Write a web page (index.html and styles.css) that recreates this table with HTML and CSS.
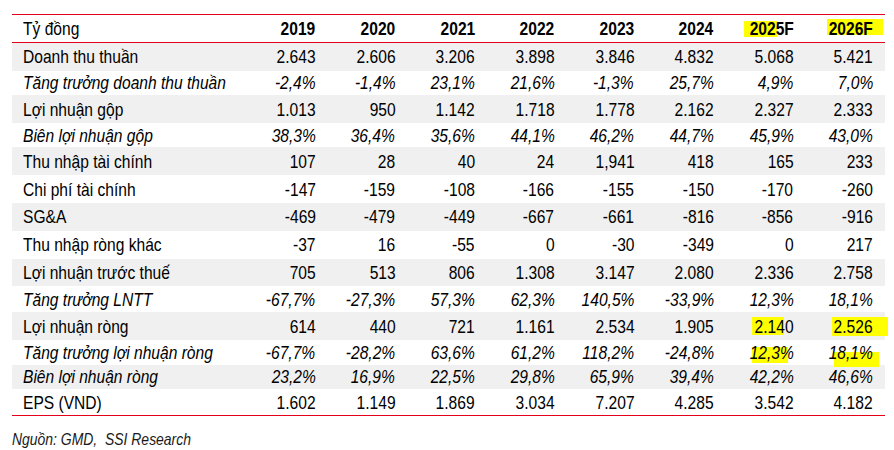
FILE: index.html
```html
<!DOCTYPE html>
<html lang="vi">
<head>
<meta charset="utf-8">
<title>GMD</title>
<link rel="stylesheet" href="styles.css">
</head>
<body>
<div class="table">
  <div class="row head">
    <div class="label"><span>Tỷ đồng</span></div>
    <div class="num"><span>2019</span></div><div class="num"><span>2020</span></div><div class="num"><span>2021</span></div><div class="num"><span>2022</span></div>
    <div class="num"><span>2023</span></div><div class="num"><span>2024</span></div>
    <div class="num hl hl-h25"><span>2025F</span></div>
    <div class="num hl hl-h26"><span>2026F</span></div>
  </div>
  <div class="row gray">
    <div class="label"><span>Doanh thu thuần</span></div>
    <div class="num"><span>2.643</span></div><div class="num"><span>2.606</span></div><div class="num"><span>3.206</span></div><div class="num"><span>3.898</span></div><div class="num"><span>3.846</span></div><div class="num"><span>4.832</span></div><div class="num"><span>5.068</span></div><div class="num"><span>5.421</span></div>
  </div>
  <div class="row pct">
    <div class="label"><span>Tăng trưởng doanh thu thuần</span></div>
    <div class="num"><span>-2,4%</span></div><div class="num"><span>-1,4%</span></div><div class="num"><span>23,1%</span></div><div class="num"><span>21,6%</span></div><div class="num"><span>-1,3%</span></div><div class="num"><span>25,7%</span></div><div class="num"><span>4,9%</span></div><div class="num"><span>7,0%</span></div>
  </div>
  <div class="row gray">
    <div class="label"><span>Lợi nhuận gộp</span></div>
    <div class="num"><span>1.013</span></div><div class="num"><span>950</span></div><div class="num"><span>1.142</span></div><div class="num"><span>1.718</span></div><div class="num"><span>1.778</span></div><div class="num"><span>2.162</span></div><div class="num"><span>2.327</span></div><div class="num"><span>2.333</span></div>
  </div>
  <div class="row pct">
    <div class="label"><span>Biên lợi nhuận gộp</span></div>
    <div class="num"><span>38,3%</span></div><div class="num"><span>36,4%</span></div><div class="num"><span>35,6%</span></div><div class="num"><span>44,1%</span></div><div class="num"><span>46,2%</span></div><div class="num"><span>44,7%</span></div><div class="num"><span>45,9%</span></div><div class="num"><span>43,0%</span></div>
  </div>
  <div class="row gray">
    <div class="label"><span>Thu nhập tài chính</span></div>
    <div class="num"><span>107</span></div><div class="num"><span>28</span></div><div class="num"><span>40</span></div><div class="num"><span>24</span></div><div class="num"><span>1,941</span></div><div class="num"><span>418</span></div><div class="num"><span>165</span></div><div class="num"><span>233</span></div>
  </div>
  <div class="row">
    <div class="label"><span>Chi phí tài chính</span></div>
    <div class="num"><span>-147</span></div><div class="num"><span>-159</span></div><div class="num"><span>-108</span></div><div class="num"><span>-166</span></div><div class="num"><span>-155</span></div><div class="num"><span>-150</span></div><div class="num"><span>-170</span></div><div class="num"><span>-260</span></div>
  </div>
  <div class="row gray">
    <div class="label"><span>SG&amp;A</span></div>
    <div class="num"><span>-469</span></div><div class="num"><span>-479</span></div><div class="num"><span>-449</span></div><div class="num"><span>-667</span></div><div class="num"><span>-661</span></div><div class="num"><span>-816</span></div><div class="num"><span>-856</span></div><div class="num"><span>-916</span></div>
  </div>
  <div class="row">
    <div class="label"><span>Thu nhập ròng khác</span></div>
    <div class="num"><span>-37</span></div><div class="num"><span>16</span></div><div class="num"><span>-55</span></div><div class="num"><span>0</span></div><div class="num"><span>-30</span></div><div class="num"><span>-349</span></div><div class="num"><span>0</span></div><div class="num"><span>217</span></div>
  </div>
  <div class="row gray">
    <div class="label"><span>Lợi nhuận trước thuế</span></div>
    <div class="num"><span>705</span></div><div class="num"><span>513</span></div><div class="num"><span>806</span></div><div class="num"><span>1.308</span></div><div class="num"><span>3.147</span></div><div class="num"><span>2.080</span></div><div class="num"><span>2.336</span></div><div class="num"><span>2.758</span></div>
  </div>
  <div class="row pct mid">
    <div class="label"><span>Tăng trưởng LNTT</span></div>
    <div class="num"><span>-67,7%</span></div><div class="num"><span>-27,3%</span></div><div class="num"><span>57,3%</span></div><div class="num"><span>62,3%</span></div><div class="num"><span>140,5%</span></div><div class="num"><span>-33,9%</span></div><div class="num"><span>12,3%</span></div><div class="num"><span>18,1%</span></div>
  </div>
  <div class="row gray">
    <div class="label"><span>Lợi nhuận ròng</span></div>
    <div class="num"><span>614</span></div><div class="num"><span>440</span></div><div class="num"><span>721</span></div><div class="num"><span>1.161</span></div><div class="num"><span>2.534</span></div><div class="num"><span>1.905</span></div>
    <div class="num hl hl-n25"><span>2.140</span></div>
    <div class="num hl hl-n26"><span>2.526</span></div>
  </div>
  <div class="row pct">
    <div class="label"><span>Tăng trưởng lợi nhuận ròng</span></div>
    <div class="num"><span>-67,7%</span></div><div class="num"><span>-28,2%</span></div><div class="num"><span>63,6%</span></div><div class="num"><span>61,2%</span></div><div class="num"><span>118,2%</span></div><div class="num"><span>-24,8%</span></div>
    <div class="num hl hl-g25"><span>12,3%</span></div>
    <div class="num hl hl-g26"><span>18,1%</span></div>
  </div>
  <div class="row pct gray">
    <div class="label"><span>Biên lợi nhuận ròng</span></div>
    <div class="num"><span>23,2%</span></div><div class="num"><span>16,9%</span></div><div class="num"><span>22,5%</span></div><div class="num"><span>29,8%</span></div><div class="num"><span>65,9%</span></div><div class="num"><span>39,4%</span></div><div class="num"><span>42,2%</span></div><div class="num"><span>46,6%</span></div>
  </div>
  <div class="row last">
    <div class="label"><span>EPS (VND)</span></div>
    <div class="num"><span>1.602</span></div><div class="num"><span>1.149</span></div><div class="num"><span>1.869</span></div><div class="num"><span>3.034</span></div><div class="num"><span>7.207</span></div><div class="num"><span>4.285</span></div><div class="num"><span>3.542</span></div><div class="num"><span>4.182</span></div>
  </div>
</div>
<p class="source"><span>Nguồn: GMD,&nbsp; SSI Research</span></p>
</body>
</html>
```

FILE: styles.css
```css
html, body {
  margin: 0;
  padding: 0;
  background: #ffffff;
}

body {
  padding: 14px 9px 0 12px;
  font-family: "Liberation Sans", Arial, sans-serif;
  color: #000000;
}

.table {
  width: 873px;
  border-top: 1px solid #e2001a;
  border-bottom: 1px solid #e2001a;
  font-size: 19px;
}

.row {
  display: grid;
  grid-template-columns: 236px repeat(8, 1fr);
  align-items: stretch;
  height: 27.8px;
}

.row.head {
  height: 27px;
  border-bottom: 1px solid #e2001a;
}

.row.head .num {
  font-weight: bold;
}

.row.gray {
  background: #f0f0f0;
}

.row.pct {
  height: 24.4px;
  font-style: italic;
}

.row.pct.mid {
  height: 26px;
}

.row.last {
  height: 26.5px;
}

.label,
.num {
  display: flex;
  align-items: center;
  white-space: nowrap;
  line-height: 1;
  position: relative;
  z-index: 0;
}

.label {
  padding-left: 11px;
  justify-content: flex-start;
}

.num {
  padding-right: 12px;
  justify-content: flex-end;
}

/* narrow (Arial Narrow-like) glyph width */
.label span,
.num span,
.source span {
  display: inline-block;
  transform: scaleX(0.82);
}

.label span,
.source span {
  transform-origin: left center;
}

.num span {
  transform-origin: right center;
}

/* yellow highlighter marks */
.hl::before {
  content: "";
  position: absolute;
  z-index: -1;
  background: #ffff00;
}

.hl-h25::before { left: 18px; width: 33px; top: 6px; height: 16px; }
.hl-h26::before { left: 22px; width: 56px; top: 4px; height: 16px; }
.hl-n25::before { left: 26px; width: 32px; top: 5px; height: 18px; }
.hl-n26::before { left: 27px; width: 56px; top: 5px; height: 19px; }
.hl-g25::before { left: 26px; width: 36px; top: 7px; height: 16px; }
.hl-g26::before { left: 29px; width: 45px; top: 12px; height: 15px; }

.source {
  margin: 14px 0 0 0;
  font-size: 17px;
  font-style: italic;
  color: #1a1a1a;
  white-space: nowrap;
}
```
